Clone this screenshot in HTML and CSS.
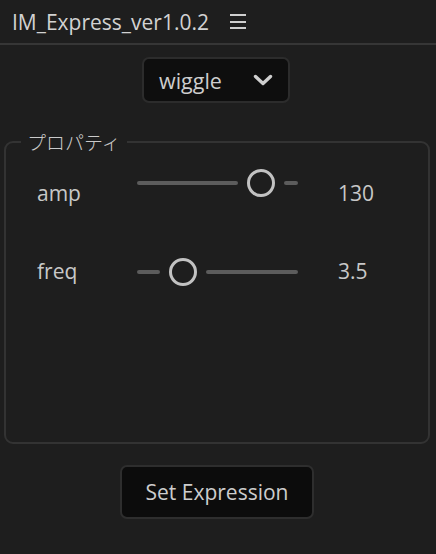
FILE: index.html
```html
<!DOCTYPE html>
<html lang="ja">
<head>
<meta charset="utf-8">
<title>IM_Express</title>
<link rel="stylesheet" href="styles.css">
</head>
<body>
<header class="header">
  <span class="title">IM_Express_ver1.0.2</span>
  <span class="menu" aria-label="menu"><i></i><i></i><i></i></span>
</header>
<div class="select-row">
  <div class="select">
    <span class="select-text">wiggle</span>
    <svg class="chevron" width="20" height="12" viewBox="0 0 20 12"><path d="M2.5 2.5 L10 9.5 L17.5 2.5" fill="none" stroke="#cfcfcf" stroke-width="3.4" stroke-linecap="round" stroke-linejoin="round"/></svg>
  </div>
</div>
<fieldset class="props">
  <legend class="props-legend">プロパティ</legend>
  <div class="prop prop-amp">
    <span class="prop-label">amp</span>
    <div class="slider">
      <span class="track" style="width:101px"></span>
      <span class="thumb"></span>
      <span class="track track-rest"></span>
    </div>
    <span class="prop-value">130</span>
  </div>
  <div class="prop prop-freq">
    <span class="prop-label">freq</span>
    <div class="slider">
      <span class="track" style="width:23px"></span>
      <span class="thumb"></span>
      <span class="track track-rest"></span>
    </div>
    <span class="prop-value">3.5</span>
  </div>
</fieldset>
<div class="actions">
  <button class="btn">Set Expression</button>
</div>
</body>
</html>
```
FILE: styles.css
```css
html, body {
  margin: 0;
  padding: 0;
}
body {
  width: 436px;
  height: 554px;
  overflow: hidden;
  background: #1e1e1e;
  color: #c8c8c8;
  font-family: "Open Sans", "Noto Sans CJK JP", sans-serif;
}
.header {
  height: 45px;
  box-sizing: border-box;
  border-bottom: 2px solid #363636;
  display: flex;
  align-items: center;
  padding-left: 12px;
  gap: 21px;
}
.title {
  font-size: 21px;
  color: #d2d2d2;
}
.menu {
  display: flex;
  flex-direction: column;
  gap: 4.5px;
  width: 16px;
}
.menu i {
  display: block;
  height: 2px;
  background: #cfcfcf;
}
.select-row {
  display: flex;
  justify-content: center;
  padding-right: 4px;
  margin-top: 12px;
}
.select {
  width: 148px;
  height: 46px;
  box-sizing: border-box;
  border: 2px solid #2c2c2c;
  border-radius: 7px;
  background: #0e0e0e;
  display: flex;
  align-items: center;
  justify-content: space-between;
  padding: 0 15px 0 15px;
}
.select-text {
  font-size: 21.5px;
  color: #cdcdcd;
}
.chevron {
  display: block;
}
.props {
  margin: 27px 0 0 4px;
  width: 426px;
  height: 314px;
  box-sizing: border-box;
  border: 2px solid #333333;
  border-radius: 9px;
  padding: 0;
}
.props-legend {
  margin-left: 15px;
  padding: 0 6px;
  font-family: "Noto Sans CJK JP", sans-serif;
  font-weight: 300;
  font-size: 19px;
  line-height: 24px;
  color: #cacaca;
}
.prop {
  display: flex;
  align-items: center;
  padding-left: 31px;
  height: 40px;
  font-size: 21px;
}
.prop-amp {
  margin-top: 19px;
}
.prop-freq {
  margin-top: 38px;
}
.prop-label {
  width: 100px;
  flex: none;
}
.slider {
  width: 161px;
  flex: none;
  display: flex;
  align-items: center;
  gap: 9px;
  position: relative;
}
.track {
  display: block;
  height: 4px;
  border-radius: 2px;
  background: #5c5c5c;
  flex: none;
}
.track-rest {
  flex: 1;
}
.thumb {
  display: block;
  width: 28px;
  height: 28px;
  box-sizing: border-box;
  border: 3.5px solid #c2c2c2;
  border-radius: 50%;
  flex: none;
}
.prop-amp .slider {
  top: -10px;
}
.prop-freq .slider {
  top: 1px;
}
.prop-value {
  margin-left: 40px;
}
.actions {
  display: flex;
  justify-content: center;
  margin-top: 21px;
  padding-right: 2px;
}
.btn {
  width: 194px;
  height: 54px;
  box-sizing: border-box;
  border: 2px solid #2e2e2e;
  border-radius: 7px;
  background: #0c0c0c;
  color: #cdcdcd;
  font-family: "Open Sans", sans-serif;
  font-size: 21px;
  padding: 0;
}
```
